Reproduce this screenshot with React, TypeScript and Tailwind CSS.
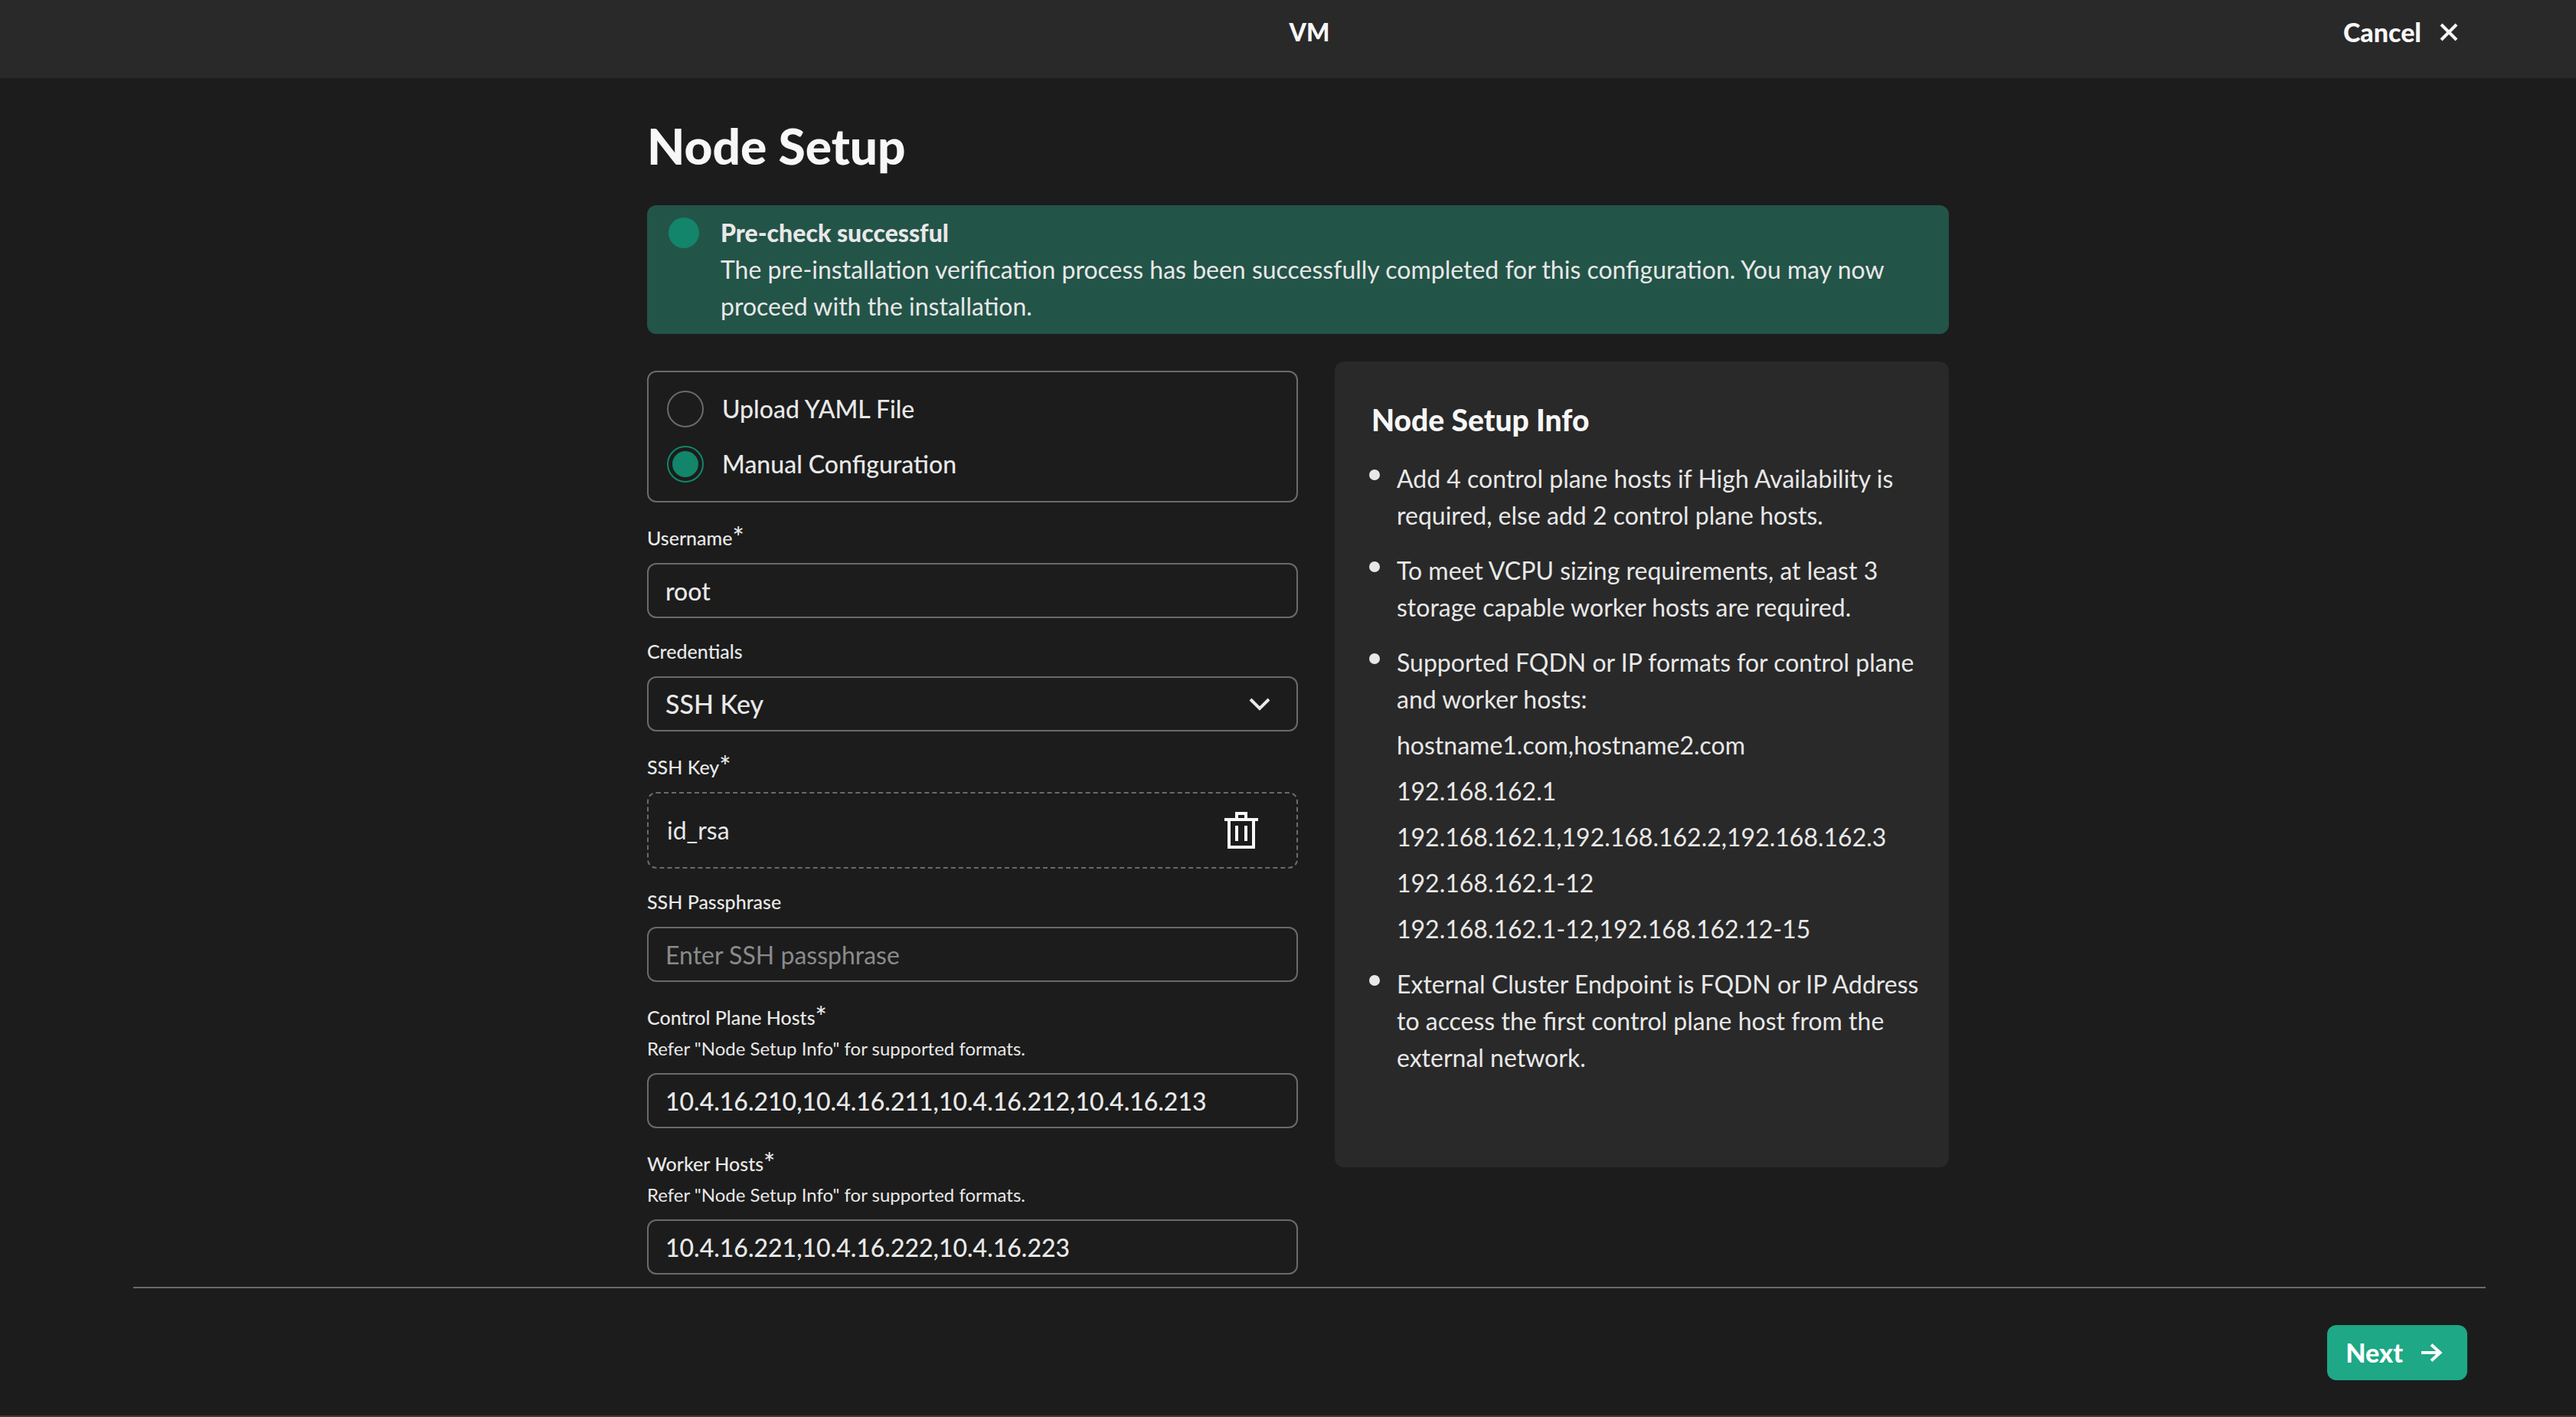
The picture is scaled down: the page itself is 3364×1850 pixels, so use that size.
import { useState, type ReactNode } from "react";

const FIELD =
  "h-[72px] w-full rounded-xl border-2 border-[#6a6a6a] bg-transparent px-[22px] font-medium text-[#e8e8e8] outline-none placeholder:font-normal placeholder:text-[#8a8a8a]";

function Field({ id, label, required, help, children }: { id: string; label: string; required?: boolean; help?: string; children: ReactNode }) {
  return (
    <div className="flex flex-col pt-6">
      <label htmlFor={id} className={`flex text-[25px] leading-[38px] font-medium ${required ? "h-[43px] pt-[3px]" : "h-10"}`}>
        {label}
        {required && <span className="text-[36px] leading-9">*</span>}
      </label>
      {help && <p className="text-[24px] leading-10">{help}</p>}
      <div className="mt-3 flex flex-col">{children}</div>
    </div>
  );
}

function Radio({ label, checked, onChange }: { label: string; checked: boolean; onChange: () => void }) {
  return (
    <label className="flex items-center gap-6 leading-[46px] font-medium">
      <input
        type="radio"
        name="mode"
        checked={checked}
        onChange={onChange}
        className="size-12 appearance-none rounded-full border-2 border-[#6a6a6a] p-[5px] checked:border-[#12856a] checked:bg-[#12856a] checked:bg-clip-content"
      />
      {label}
    </label>
  );
}

const FORMATS = ["hostname1.com,hostname2.com", "192.168.162.1", "192.168.162.1,192.168.162.2,192.168.162.3", "192.168.162.1-12", "192.168.162.1-12,192.168.162.12-15"];

function InfoItem({ children }: { children: ReactNode }) {
  return (
    <li className="flex gap-[22px]">
      <span className="mt-3 size-3.5 shrink-0 rounded-full bg-[#e8e8e8]" />
      <div>{children}</div>
    </li>
  );
}

export default function App() {
  const [manual, setManual] = useState(true);
  return (
    <div className="flex min-h-screen flex-col border-b-2 border-[#3d3d3d] bg-[#1c1c1c] font-['Lato','Liberation_Sans',sans-serif] text-[32px] leading-[48px] text-[#e8e8e8]">
      <header className="grid h-[102px] grid-cols-3 bg-[#292929] pt-[18px] pr-[142px] pl-[198px] text-[#f7f7f7]">
        <h2 className="col-start-2 text-center font-black">VM</h2>
        <button type="button" className="flex h-12 items-center gap-6 justify-self-end px-3 text-[34px] font-black">
          Cancel
          <svg viewBox="0 0 24 24" className="size-6" fill="none" stroke="currentColor" strokeWidth="4">
            <path d="M2 2 22 22M22 2 2 22" />
          </svg>
        </button>
      </header>

      <main className="mx-auto w-full max-w-[1726px] grow pt-[53px] pl-[26px]">
        <h1 className="text-[64px] leading-[72px] font-black text-[#f7f7f7]">Node Setup</h1>
        <section className="mt-[41px] flex gap-7 rounded-xl bg-[#235448] py-3 pr-12 pl-7">
          <span className="mt-1 size-10 shrink-0 rounded-full bg-[#12856a]" />
          <div>
            <h3 className="font-black">Pre-check successful</h3>
            <p>The pre-installation verification process has been successfully completed for this configuration. You may now proceed with the installation.</p>
          </div>
        </section>

        <div className="flex items-start gap-12">
          <form className="mt-12 min-w-0 flex-1">
            <fieldset className="flex flex-col gap-6 rounded-xl border-2 border-[#6a6a6a] p-6">
              <Radio label="Upload YAML File" checked={!manual} onChange={() => setManual(false)} />
              <Radio label="Manual Configuration" checked={manual} onChange={() => setManual(true)} />
            </fieldset>
            <Field id="user" label="Username" required>
              <input id="user" defaultValue="root" className={FIELD} />
            </Field>
            <Field id="cred" label="Credentials">
              <div className="relative">
                <select id="cred" className={`${FIELD} appearance-none text-[34px]`}>
                  <option>SSH Key</option>
                </select>
                <svg viewBox="0 0 28 18" className="pointer-events-none absolute top-[28px] right-9 h-[18px] w-7" fill="none" stroke="currentColor" strokeWidth="4">
                  <path d="M2 2 14 14 26 2" />
                </svg>
              </div>
            </Field>
            <Field id="key" label="SSH Key" required>
              <div className="flex h-[100px] items-center justify-between rounded-xl border-2 border-dashed border-[#6a6a6a] pr-[50px] pl-6">
                <span>id_rsa</span>
                <button id="key" type="button" aria-label="Remove file">
                  <svg viewBox="0 0 44 48" className="h-12 w-11" fill="none" stroke="#f7f7f7" strokeWidth="4">
                    <path d="M0 10H44M6 10V46H38V10M16 10V2H28V10M16 18V38M28 18V38" />
                  </svg>
                </button>
              </div>
            </Field>
            <Field id="pass" label="SSH Passphrase">
              <input id="pass" placeholder="Enter SSH passphrase" className={FIELD} />
            </Field>
            <Field id="cp" label="Control Plane Hosts" required help={'Refer "Node Setup Info" for supported formats.'}>
              <input id="cp" defaultValue="10.4.16.210,10.4.16.211,10.4.16.212,10.4.16.213" className={FIELD} />
            </Field>
            <Field id="wk" label="Worker Hosts" required help={'Refer "Node Setup Info" for supported formats.'}>
              <input id="wk" defaultValue="10.4.16.221,10.4.16.222,10.4.16.223" className={FIELD} />
            </Field>
          </form>

          <aside className="mt-9 min-h-[1052px] w-[802px] rounded-xl bg-[#292929] p-12 pr-8">
            <h2 className="mt-1 text-[39px] font-black text-[#f7f7f7]">Node Setup Info</h2>
            <ul className="mt-[29px] -ml-[3px] flex flex-col gap-6">
              <InfoItem>Add 4 control plane hosts if High Availability is required, else add 2 control plane hosts.</InfoItem>
              <InfoItem>To meet VCPU sizing requirements, at least 3 storage capable worker hosts are required.</InfoItem>
              <InfoItem>
                Supported FQDN or IP formats for control plane and worker hosts:
                {FORMATS.map((f) => (
                  <p key={f} className="mt-3">{f}</p>
                ))}
              </InfoItem>
              <InfoItem>External Cluster Endpoint is FQDN or IP Address to access the first control plane host from the external network.</InfoItem>
            </ul>
          </aside>
        </div>
      </main>

      <footer className="mt-4 mr-[118px] ml-[174px] flex justify-end border-t-2 border-[#6a6a6a] pt-12 pr-6 pb-[46px]">
        <button type="button" className="flex h-[72px] items-center gap-6 rounded-xl bg-[#1ea885] pr-8 pl-6 text-[34px] font-black text-white">
          Next
          <svg viewBox="0 0 28 24" className="h-6 w-7" fill="none" stroke="currentColor" strokeWidth="4">
            <path d="M0 12H25M13 1.5 24.5 12 13 22.5" />
          </svg>
        </button>
      </footer>
    </div>
  );
}
